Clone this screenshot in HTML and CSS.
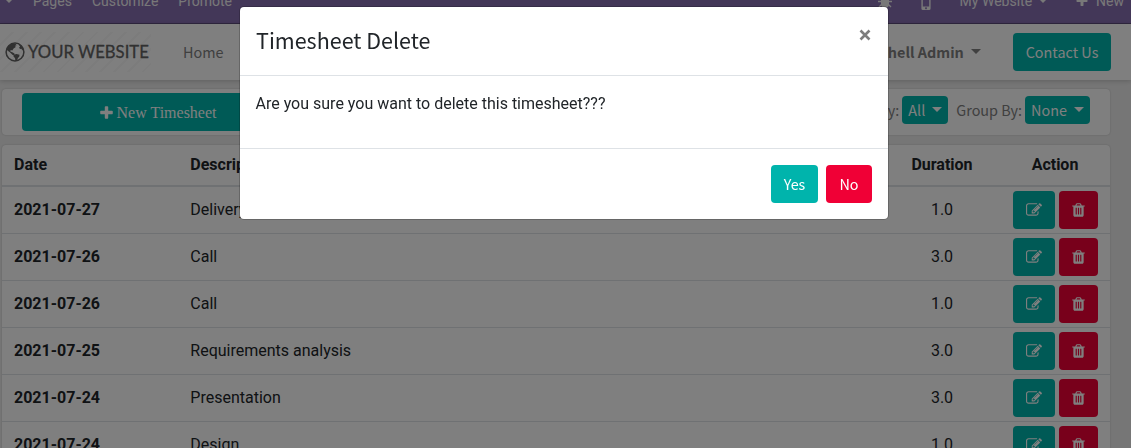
FILE: index.html
```html
<!DOCTYPE html>
<html lang="en">
	<head>
		<meta charset="utf-8">
		<title>Timesheets</title>
		<link rel="stylesheet" href="styles.css">
	</head>
	<body>
		<svg class="sprite">
			<symbol id="edit" viewBox="0 0 1792 1792"><path d="M888 1184l116-116-152-152-116 116v56h96v96h56zm440-720q-16-16-33 1l-350 350q-17 17-1 33t33-1l350-350q17-17 1-33zm80 594v190q0 119-84.500 203.500t-203.500 84.500h-832q-119 0-203.500-84.500t-84.500-203.500v-832q0-119 84.500-203.500t203.500-84.500h832q63 0 117 25 15 7 18 23 3 17-9 29l-49 49q-14 14-32 8-23-6-45-6h-832q-66 0-113 47t-47 113v832q0 66 47 113t113 47h832q66 0 113-47t47-113v-126q0-13 9-22l64-64q15-15 35-7t20 29zm-96-738l288 288-672 672h-288v-288zm444 132l-92 92-288-288 92-92q28-28 68-28t68 28l152 152q28 28 28 68t-28 68z"/></symbol>
			<symbol id="trash" viewBox="192 0 1408 1792"><path d="M704 1376v-704q0-14-9-23t-23-9h-64q-14 0-23 9t-9 23v704q0 14 9 23t23 9h64q14 0 23-9t9-23zm256 0v-704q0-14-9-23t-23-9h-64q-14 0-23 9t-9 23v704q0 14 9 23t23 9h64q14 0 23-9t9-23zm256 0v-704q0-14-9-23t-23-9h-64q-14 0-23 9t-9 23v704q0 14 9 23t23 9h64q14 0 23-9t9-23zm-544-992h448l-48-117q-7-9-17-11h-317q-10 2-17 11zm928 32v64q0 14-9 23t-23 9h-96v948q0 83-47 143.500t-113 60.500h-832q-66 0-113-58.500t-47-141.500v-952h-96q-14 0-23-9t-9-23v-64q0-14 9-23t23-9h309l70-167q15-37 54-63t79-26h320q40 0 79 26t54 63l70 167h309q14 0 23 9t9 23z"/></symbol>
			<symbol id="plus" viewBox="192 0 1408 1792"><path d="M1600 736v192q0 40-28 68t-68 28h-416v416q0 40-28 68t-68 28h-192q-40 0-68-28t-28-68v-416h-416q-40 0-68-28t-28-68v-192q0-40 28-68t68-28h416v-416q0-40 28-68t68-28h192q40 0 68 28t28 68v416h416q40 0 68 28t28 68z"/></symbol>
		</svg>

		<div class="topbar">
			<div class="top-left">
				<i class="caret small"></i>
				<span>Pages</span>
				<span>Customize</span>
				<span>Promote</span>
			</div>
			<div class="top-right">
				<svg class="bug" viewBox="0 0 14 14"><path d="M4 3a3 3 0 0 1 6 0zM3 4h8v6a4 4 0 0 1-8 0z"/><path d="M0 7.500h14M1 2l3 3M13 2l-3 3M1 13l3-3M13 13l-3-3" fill="none" stroke="currentColor" stroke-width="1.300"/></svg>
				<svg class="phone" viewBox="0 0 10 16"><path fill-rule="evenodd" d="M2 0h6a1.600 1.600 0 0 1 1.600 1.600v12.800A1.600 1.600 0 0 1 8 16H2a1.600 1.600 0 0 1-1.600-1.600V1.600A1.600 1.600 0 0 1 2 0zM1.800 3v9.500h6.400V3zM5 13.300a.9.900 0 1 0 .01 0z"/></svg>
				<span class="site">My Website</span>
				<i class="caret small"></i>
				<svg class="plus"><use href="#plus"/></svg>
				<span>New</span>
			</div>
		</div>

		<div class="navbar">
			<div class="logo">
				<svg viewBox="0 0 20 20"><circle cx="10" cy="10" r="8.900" fill="none" stroke="currentColor" stroke-width="1.500"/><path d="M3 4.500L7 1.500l3.500.2 1.200 1.600-1.700.4.800 1.400-2.200 1.300-1.300 2-1.600-.5-.4 1.500 2 .8 2.200 1.400-.4 1.600-1.400-.2-2.600-2.500L2.500 8.500 1.500 7.500zM13.300 2.200l3.200 1.900 1.900 3-.8 1.400-1.300-1.700-1.300.2-.9-1.400 1-1.200zM8.500 12.800l3-.9 3 .9-.2 1.800-1.500 1.600-.8 2.600-1.600.2-.4-3-1.500-1.600z"/></svg>
				<span>YOUR WEBSITE</span>
			</div>
			<a class="home">Home</a>
			<a class="user">Mitchell Admin <i class="caret"></i></a>
			<a class="btn teal contact">Contact Us</a>
		</div>

		<div class="content">
			<div class="toolbar">
				<a class="btn teal new"><svg><use href="#plus"/></svg>New Timesheet</a>
				<div class="filters">
					<span>Filter By:</span>
					<a class="btn teal sm all">All <i class="caret"></i></a>
					<span class="group">Group By:</span>
					<a class="btn teal sm">None <i class="caret"></i></a>
				</div>
			</div>

			<table>
				<thead>
					<tr><th class="date">Date</th><th>Description</th><th class="dur">Duration</th><th class="act">Action</th></tr>
				</thead>
				<tbody>
					<tr>
						<th>2021-07-27</th><td>Delivery</td><td class="dur">1.0</td>
						<td><div class="buttons"><a class="btn teal"><svg><use href="#edit"/></svg></a><a class="btn red"><svg class="bin"><use href="#trash"/></svg></a></div></td>
					</tr>
					<tr>
						<th>2021-07-26</th><td>Call</td><td class="dur">3.0</td>
						<td><div class="buttons"><a class="btn teal"><svg><use href="#edit"/></svg></a><a class="btn red"><svg class="bin"><use href="#trash"/></svg></a></div></td>
					</tr>
					<tr>
						<th>2021-07-26</th><td>Call</td><td class="dur">1.0</td>
						<td><div class="buttons"><a class="btn teal"><svg><use href="#edit"/></svg></a><a class="btn red"><svg class="bin"><use href="#trash"/></svg></a></div></td>
					</tr>
					<tr>
						<th>2021-07-25</th><td>Requirements analysis</td><td class="dur">3.0</td>
						<td><div class="buttons"><a class="btn teal"><svg><use href="#edit"/></svg></a><a class="btn red"><svg class="bin"><use href="#trash"/></svg></a></div></td>
					</tr>
					<tr>
						<th>2021-07-24</th><td>Presentation</td><td class="dur">3.0</td>
						<td><div class="buttons"><a class="btn teal"><svg><use href="#edit"/></svg></a><a class="btn red"><svg class="bin"><use href="#trash"/></svg></a></div></td>
					</tr>
					<tr>
						<th>2021-07-24</th><td>Design</td><td class="dur">1.0</td>
						<td><div class="buttons"><a class="btn teal"><svg><use href="#edit"/></svg></a><a class="btn red"><svg class="bin"><use href="#trash"/></svg></a></div></td>
					</tr>
				</tbody>
			</table>
		</div>

		<div class="backdrop">
			<div class="modal">
				<div class="modal-header">
					<h4>Timesheet Delete</h4>
					<svg class="close" viewBox="0 0 12 12"><path d="M1.500 1.500l9 9M10.500 1.500l-9 9"/></svg>
				</div>
				<div class="modal-body">Are you sure you want to delete this timesheet???</div>
				<div class="modal-footer">
					<a class="btn teal">Yes</a>
					<a class="btn red">No</a>
				</div>
			</div>
		</div>
	</body>
</html>
```
FILE: styles.css
```css
* {
	box-sizing: border-box;
}

body {
	margin: 0;
	height: 448px;
	overflow: hidden;
	background: #ededed;
	color: #212529;
	font-family: Roboto, sans-serif;
	font-size: 16px;
	line-height: 24px;
}

svg {
	fill: currentColor;
	width: 16px;
	height: 16px;
	flex: none;
}

.sprite {
	display: none;
}

.caret {
	display: inline-block;
	flex: none;
	border: 5px solid transparent;
	border-top-color: currentColor;
	border-bottom: 0;
}

.caret.small {
	border-width: 3px;
	border-bottom: 0;
}

.btn {
	display: flex;
	align-items: center;
	justify-content: center;
	height: 38px;
	border-radius: 4px;
	color: #fff;
	font-family: "Noto Sans CJK SC", sans-serif;
	font-size: 14.400px;
	white-space: nowrap;
}

.teal {
	background: #00b4ac;
}

.red {
	background: #f00036;
}

/* editor bar */
.topbar {
	display: flex;
	justify-content: space-between;
	height: 24px;
	padding: 0 7px 0 6px;
	background: #876fb1;
	border-bottom: 1px solid #5f4e7d;
	color: #f0f0f0;
	font-size: 14px;
	line-height: 2px;
}

.top-left, .top-right {
	display: flex;
	height: 2px;
	align-items: center;
}

.top-left {
	gap: 20px;
}

.top-left .caret {
	margin-right: 1px;
}

.bug {
	width: 14px;
	height: 14px;
	margin-right: 29px;
}

.phone {
	width: 10px;
	height: 16px;
	margin: 1px 29px 0 0;
}

.site {
	margin-right: 8px;
}

.plus {
	width: 12px;
	height: 14px;
	margin: 0 8px 0 30px;
}

.navbar {
	display: flex;
	align-items: center;
	height: 56px;
	padding: 0 20px 0 0;
	background: #fff;
	box-shadow: 0 1px 5px rgba(0, 0, 0, 0.2);
	position: relative;
	font-family: "Noto Sans CJK SC", sans-serif;
	font-size: 14.400px;
}

.logo {
	display: flex;
	align-items: center;
	width: 151px;
	height: 40px;
	padding-left: 5px;
	gap: 3px;
	background: repeating-linear-gradient(135deg, #fff 0 8px, #f9f9f9 8px 10px);
	color: #626262;
	font-family: Lato, sans-serif;
	font-size: 16.700px;
	-webkit-text-stroke: 0.300px #626262;
	white-space: nowrap;
}

.logo svg {
	width: 20px;
	height: 20px;
}

.home {
	margin-left: 32px;
	color: #808080;
}

.user {
	margin-left: auto;
	color: #808080;
	font-weight: bold;
}

.user .caret {
	margin-left: 4px;
	vertical-align: 4px;
}

.contact {
	width: 98px;
	margin-left: 32px;
}

.content {
	width: 1110px;
	padding: 9px 0 0 2px;
}

.toolbar {
	display: flex;
	justify-content: space-between;
	height: 46px;
	padding: 4px 20px;
	margin-bottom: 10px;
	background: #fff;
	border-radius: 4px;
	box-shadow: 0 0 2px rgba(0, 0, 0, 0.2);
}

.new {
	width: 272px;
	padding-top: 1px;
	font-family: "Liberation Serif", serif;
	font-size: 16px;
}

.new svg {
	width: 13px;
	margin-right: 4px;
}

.filters {
	display: flex;
	align-items: center;
	height: 28px;
	margin-top: 3px;
	color: #808080;
	font-family: "Noto Sans CJK SC", sans-serif;
	font-size: 14.400px;
	white-space: nowrap;
}

.sm {
	width: 65px;
	height: 28px;
	margin-left: 3px;
}

.sm .caret {
	margin: 0 0 2px 7px;
}

.all {
	width: 46px;
}

.group {
	margin-left: 8px;
}

table {
	width: 1108px;
	table-layout: fixed;
	border-spacing: 0;
	background: #fff;
	border-radius: 4px;
	box-shadow: 0 0 2px rgba(0, 0, 0, 0.2);
}

th, td {
	height: 47px;
	padding: 0 12px;
	border-top: 1px solid #dee2e6;
	text-align: left;
}

thead th {
	height: 42px;
	border-top: 0;
	border-bottom: 2px solid #dee2e6;
}

tbody tr:first-child th,
tbody tr:first-child td {
	height: 46px;
	border-top: 0;
}

.date {
	width: 176px;
}

td:nth-child(2),
th:nth-child(2) {
	padding-left: 12.300px;
}

.dur {
	width: 114px;
	text-align: center;
}

.act {
	width: 111px;
	padding-right: 11px;
	text-align: center;
}

.buttons {
	display: flex;
	gap: 4px;
	margin: 0 -12px 0 2px;
}

.buttons .teal {
	width: 42px;
}

.buttons .red {
	width: 39px;
}

.buttons .bin {
	width: 13px;
}

/* dialog */
.backdrop {
	position: fixed;
	inset: 0;
	padding-top: 7px;
	background: rgba(0, 0, 0, 0.5);
}

.modal {
	width: 648px;
	height: 212px;
	margin-left: 240px;
	background: #fff;
	border-radius: 4px;
	box-shadow: 0 0 0 1px rgba(0, 0, 0, 0.2);
}

.modal-header {
	display: flex;
	justify-content: space-between;
	height: 69px;
	padding: 16px;
	border-bottom: 1px solid #dee2e6;
}

h4 {
	margin: 0;
	font-family: "Noto Sans CJK SC", sans-serif;
	font-size: 21.500px;
	font-weight: normal;
	line-height: 34px;
}

.close {
	width: 12px;
	height: 12px;
	margin: 6px 1px 0 0;
	stroke: #7c7c7c;
	stroke-width: 2.600;
}

.modal-body {
	height: 72px;
	padding: 16px 15.500px;
}

.modal-footer {
	display: flex;
	justify-content: flex-end;
	gap: 8px;
	padding: 16px;
	border-top: 1px solid #dee2e6;
}

.modal-footer .teal {
	width: 47px;
}

.modal-footer .red {
	width: 46px;
}
```
